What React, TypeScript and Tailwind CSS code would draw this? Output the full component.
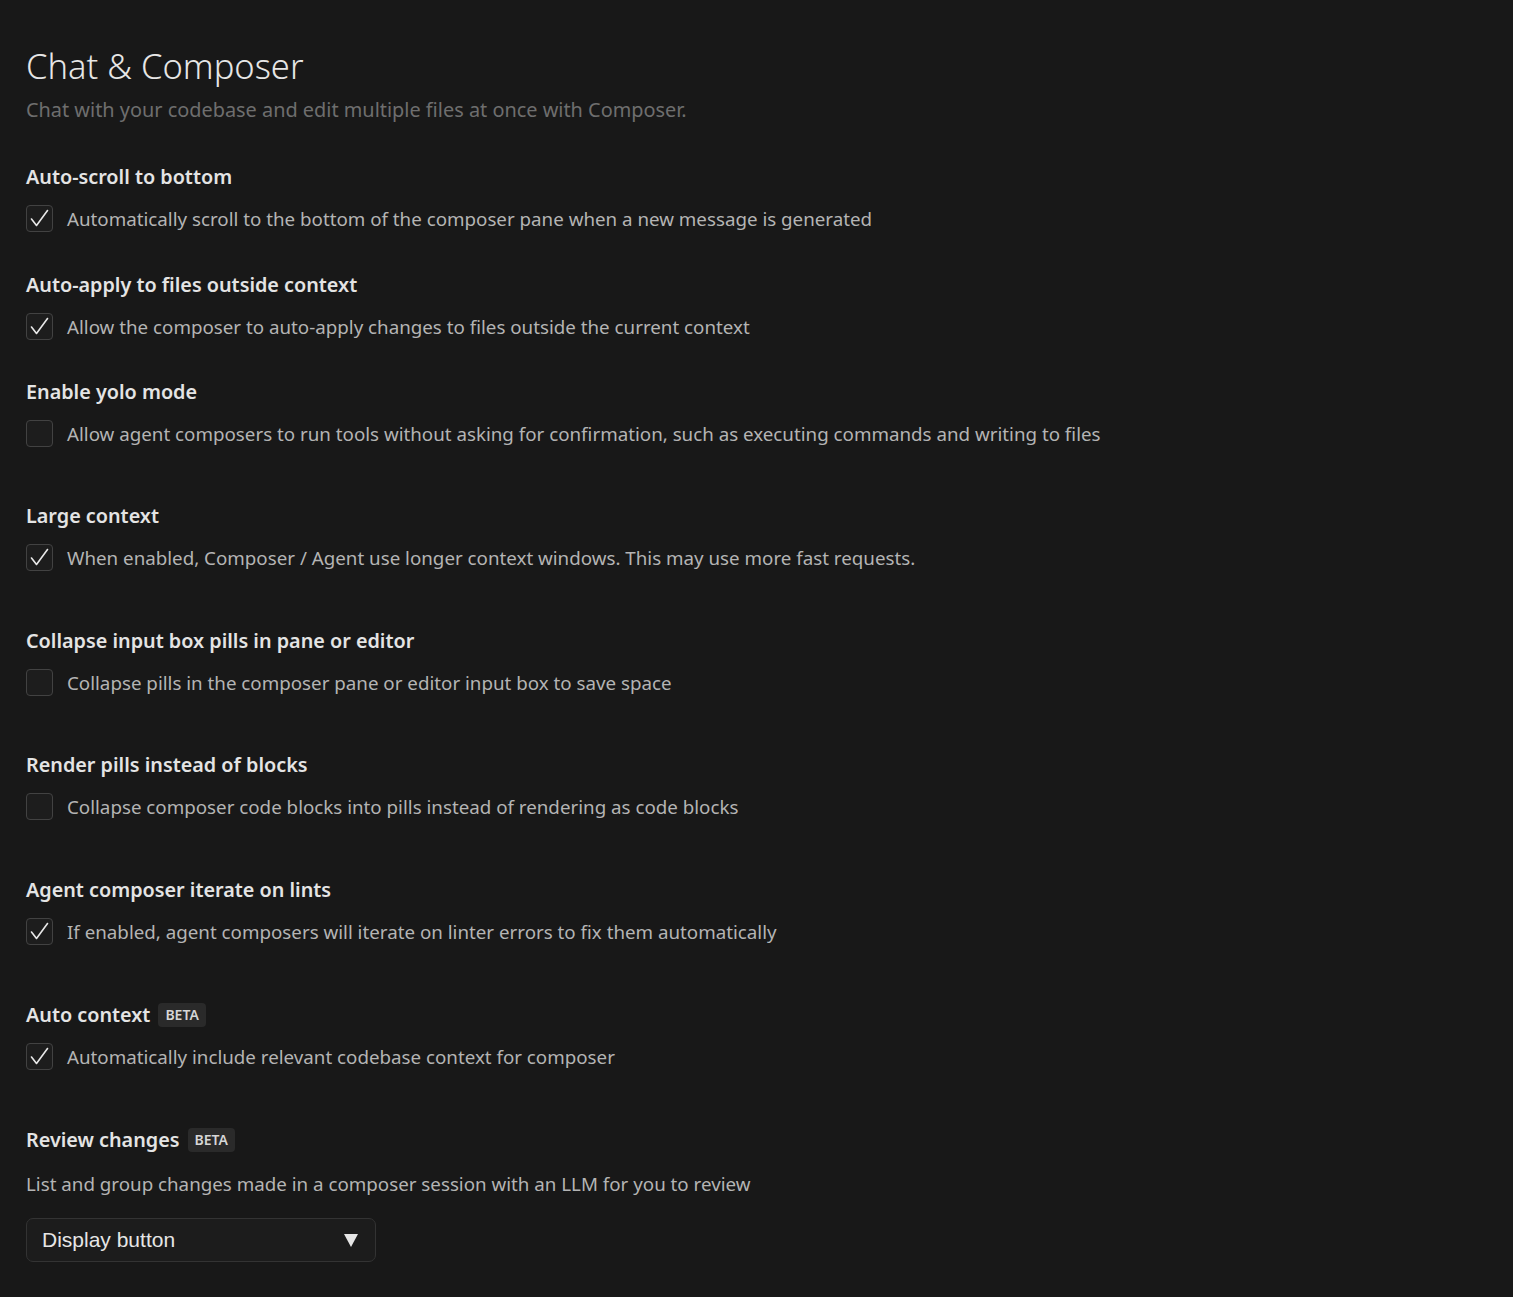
import React from 'react';

interface Setting {
  title: string;
  description: string;
  checked: boolean;
  beta?: boolean;
  spacing: string;
}

const settings: Setting[] = [
  {
    title: 'Auto-scroll to bottom',
    description: 'Automatically scroll to the bottom of the composer pane when a new message is generated',
    checked: true,
    spacing: 'mb-[39px]',
  },
  {
    title: 'Auto-apply to files outside context',
    description: 'Allow the composer to auto-apply changes to files outside the current context',
    checked: true,
    spacing: 'mb-[38px]',
  },
  {
    title: 'Enable yolo mode',
    description:
      'Allow agent composers to run tools without asking for confirmation, such as executing commands and writing to files',
    checked: false,
    spacing: 'mb-[55px]',
  },
  {
    title: 'Large context',
    description: 'When enabled, Composer / Agent use longer context windows. This may use more fast requests.',
    checked: true,
    spacing: 'mb-[56px]',
  },
  {
    title: 'Collapse input box pills in pane or editor',
    description: 'Collapse pills in the composer pane or editor input box to save space',
    checked: false,
    spacing: 'mb-[55px]',
  },
  {
    title: 'Render pills instead of blocks',
    description: 'Collapse composer code blocks into pills instead of rendering as code blocks',
    checked: false,
    spacing: 'mb-[56px]',
  },
  {
    title: 'Agent composer iterate on lints',
    description: 'If enabled, agent composers will iterate on linter errors to fix them automatically',
    checked: true,
    spacing: 'mb-[56px]',
  },
  {
    title: 'Auto context',
    description: 'Automatically include relevant codebase context for composer',
    checked: true,
    beta: true,
    spacing: 'mb-[56px]',
  },
];

const BetaBadge: React.FC = () => (
  <span className="ml-2 rounded-[4px] bg-[#2a2a2a] px-[7px] py-[1px] text-[14px] font-semibold leading-[22px] text-[#d6d6d6]">
    BETA
  </span>
);

const Checkbox: React.FC<{ checked: boolean }> = ({ checked }) => (
  <div className="flex h-[27px] w-[27px] shrink-0 items-center justify-center rounded-[4px] border border-[#424242] bg-[#1d1d1d]">
    {checked && (
      <svg width="23" height="23" viewBox="0 0 23 23" fill="none">
        <path d="M3.5 12 L8.5 18.5 L19.5 3.5" stroke="#e8e8e8" strokeWidth="1.6" strokeLinecap="round" strokeLinejoin="round" />
      </svg>
    )}
  </div>
);

const SettingRow: React.FC<{ setting: Setting }> = ({ setting }) => (
  <div className={setting.spacing}>
    <div className="flex h-[28px] items-center">
      <h3 className="text-[19.8px] font-semibold leading-[28px] text-[#e4e4e4]">{setting.title}</h3>
      {setting.beta && <BetaBadge />}
    </div>
    <label className="mt-[14px] flex items-center gap-[14px]">
      <Checkbox checked={setting.checked} />
      <span className="text-[18.75px] leading-[27px] text-[#b4b4b4]">{setting.description}</span>
    </label>
  </div>
);

export default function App() {
  return (
    <div
      className="min-h-[1297px] w-full bg-[#181818] pl-[26px] pt-[42px]"
      style={{ fontFamily: '"Noto Sans", "Open Sans", sans-serif' }}
    >
      <h1 className="text-[34.5px] font-light leading-[48px] text-[#e6e6e6]">Chat &amp; Composer</h1>
      <p className="mt-[6px] text-[19.9px] leading-[28px] text-[#6e6e6e]">
        Chat with your codebase and edit multiple files at once with Composer.
      </p>

      <div className="mt-[39px]">
        {settings.map((s) => (
          <SettingRow key={s.title} setting={s} />
        ))}

        <div>
          <div className="flex h-[28px] items-center">
            <h3 className="text-[19.8px] font-semibold leading-[28px] text-[#e4e4e4]">Review changes</h3>
            <BetaBadge />
          </div>
          <p className="mt-[16px] text-[18.75px] leading-[28px] text-[#b4b4b4]">
            List and group changes made in a composer session with an LLM for you to review
          </p>
          <button
            className="mt-[20px] flex h-[44px] w-[350px] items-center justify-between rounded-[7px] border border-[#333333] bg-[#1c1c1c] pl-[15px] pr-[16px] text-[21px] text-[#e6e6e6]"
            style={{ fontFamily: '"Liberation Sans", Arial, sans-serif' }}
          >
            <span>Display button</span>
            <svg width="16" height="16" viewBox="0 0 16 16">
              <path d="M1 2 L15 2 L8 15 Z" fill="#e6e6e6" />
            </svg>
          </button>
        </div>
      </div>
    </div>
  );
}
